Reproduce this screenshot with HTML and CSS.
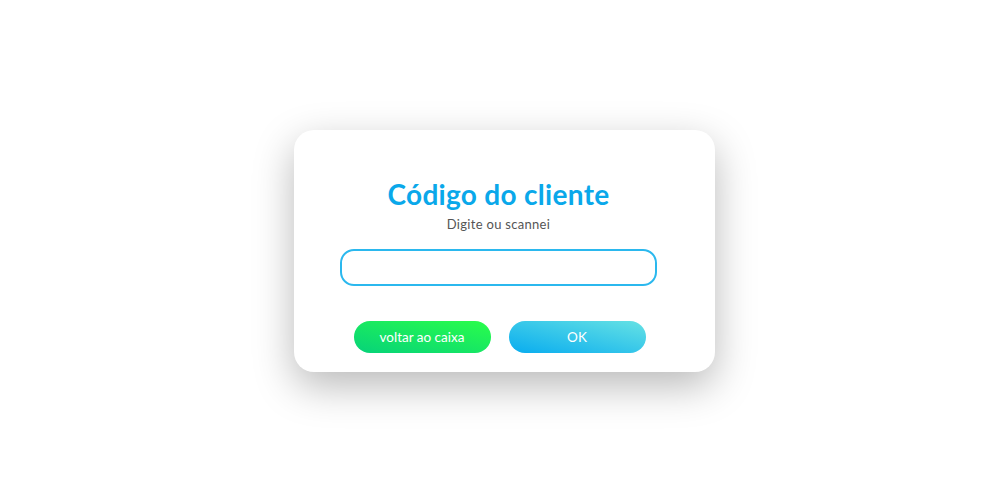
FILE: index.html
```html
<!DOCTYPE html>
<html lang="pt">
<head>
<meta charset="utf-8">
<link rel="stylesheet" href="styles.css">
</head>
<body>
<div class="stage">
  <div class="card">
    <h1 class="title">Código do cliente</h1>
    <p class="subtitle">Digite ou scannei</p>
    <input class="field" type="text">
    <div class="actions">
      <button class="btn btn-green">voltar ao caixa</button>
      <button class="btn btn-blue">OK</button>
    </div>
  </div>
</div>
</body>
</html>
```
FILE: styles.css
```css
html, body {
  margin: 0;
  padding: 0;
  background: #ffffff;
}
.stage {
  width: 1000px;
  height: 500px;
  box-sizing: border-box;
  padding: 130px 0 0 294px;
  font-family: "Lato", "Noto Sans", sans-serif;
}
.card {
  width: 421px;
  height: 242px;
  box-sizing: border-box;
  background: #fff;
  border-radius: 20px;
  box-shadow: 0 14px 40px rgba(0, 0, 0, 0.28);
  padding: 48px 58px 0 46px;
  display: flex;
  flex-direction: column;
  align-items: center;
}
.title {
  margin: 0;
  font-size: 28px;
  font-weight: 700;
  line-height: 32px;
  letter-spacing: 0.3px;
  color: #0aa8ea;
}
.subtitle {
  margin: 6px 0 0;
  font-size: 13px;
  line-height: 16px;
  letter-spacing: 0.3px;
  color: #555;
}
.field {
  margin-top: 17px;
  width: 317px;
  height: 37px;
  box-sizing: border-box;
  border: 2px solid #2bb8ee;
  border-radius: 14px;
  outline: none;
  background: #fff;
}
.actions {
  margin-top: 35px;
  display: flex;
  gap: 18px;
  padding-left: 2px;
}
.btn {
  width: 137px;
  height: 32px;
  border: none;
  border-radius: 16px;
  color: #fff;
  font-family: "Lato", "Noto Sans", sans-serif;
  font-size: 13.5px;
  padding: 0;
}
.btn-green {
  background: linear-gradient(to top right, #06d27a, #2afe4a);
}
.btn-blue {
  background: linear-gradient(to top right, #08acef, #66e2e4);
}
```
